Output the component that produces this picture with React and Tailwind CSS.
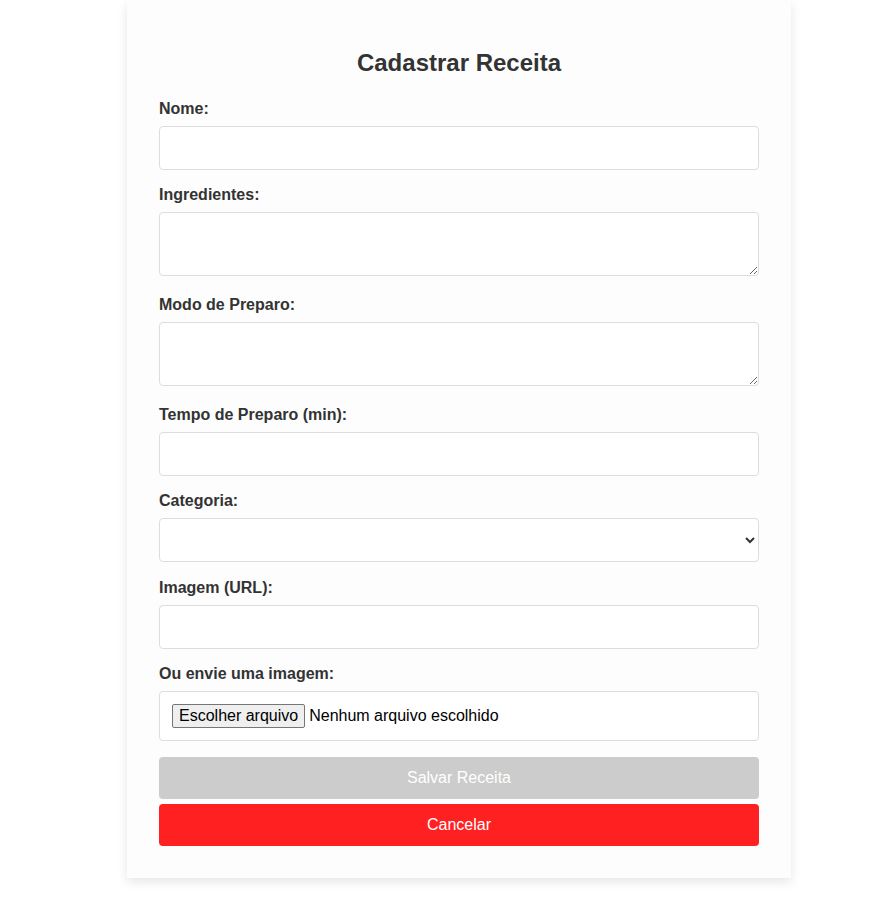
import { useState } from 'react'

function Label({ children, htmlFor }) {
  return (
    <label htmlFor={htmlFor} className="block text-base font-bold leading-[18px] text-[#333] pt-[2px] mb-[8px]">
      {children}
    </label>
  )
}

const boxCls = 'block w-full h-[44px] px-[10px] bg-white border border-[#dddddd] rounded-[4px] text-base text-[#333] outline-none'

export default function App() {
  const [form, setForm] = useState({ nome: '', ingredientes: '', modo: '', tempo: '', categoria: '', imagem: '' })
  const set = (k) => (e) => setForm({ ...form, [k]: e.target.value })

  return (
    <div className="min-h-[899px] bg-white font-['Liberation_Sans',Arial,sans-serif]">
      <div className="ml-[127px] w-[664px] bg-[#fdfdfd] shadow-[0_4px_10px_rgba(0,0,0,0.1)] px-8 pt-[49px] pb-8">
        <h2 className="text-2xl font-bold leading-[28px] text-center text-[#333] mb-[21px]">Cadastrar Receita</h2>

        <form onSubmit={(e) => e.preventDefault()}>
          <Label htmlFor="nome">Nome:</Label>
          <input id="nome" type="text" value={form.nome} onChange={set('nome')} className={boxCls + ' mb-[14px]'} />

          <Label htmlFor="ingredientes">Ingredientes:</Label>
          <textarea id="ingredientes" value={form.ingredientes} onChange={set('ingredientes')}
            className="block w-full h-[64px] p-[10px] bg-white border border-[#dddddd] rounded-[4px] text-base outline-none mb-[18px]" />

          <Label htmlFor="modo">Modo de Preparo:</Label>
          <textarea id="modo" value={form.modo} onChange={set('modo')}
            className="block w-full h-[64px] p-[10px] bg-white border border-[#dddddd] rounded-[4px] text-base outline-none mb-[18px]" />

          <Label htmlFor="tempo">Tempo de Preparo (min):</Label>
          <input id="tempo" type="number" value={form.tempo} onChange={set('tempo')} className={boxCls + ' mb-[14px]'} />

          <Label htmlFor="categoria">Categoria:</Label>
          <select id="categoria" value={form.categoria} onChange={set('categoria')} className={boxCls + ' mb-[15px]'}>
            <option value=""></option>
            <option value="doce">Doce</option>
            <option value="salgado">Salgado</option>
          </select>

          <Label htmlFor="imagem">Imagem (URL):</Label>
          <input id="imagem" type="text" value={form.imagem} onChange={set('imagem')} className={boxCls + ' mb-[14px]'} />

          <Label>Ou envie uma imagem:</Label>
          <div className="flex items-center h-[50px] px-[12px] bg-white border border-[#dddddd] rounded-[4px] mb-4">
            <span className="h-[24px] px-[6px] flex items-center bg-[#efefef] border border-[#767676] rounded-[2px] text-base text-black">
              Escolher arquivo
            </span>
            <span className="ml-1 text-base text-black">Nenhum arquivo escolhido</span>
          </div>

          <button type="submit" disabled className="block w-full h-[42px] rounded-[4px] bg-[#cccccc] text-white text-base mb-[5px]">
            Salvar Receita
          </button>
          <button type="button" className="block w-full h-[42px] rounded-[4px] bg-[#ff2121] text-white text-base">
            Cancelar
          </button>
        </form>
      </div>
    </div>
  )
}
